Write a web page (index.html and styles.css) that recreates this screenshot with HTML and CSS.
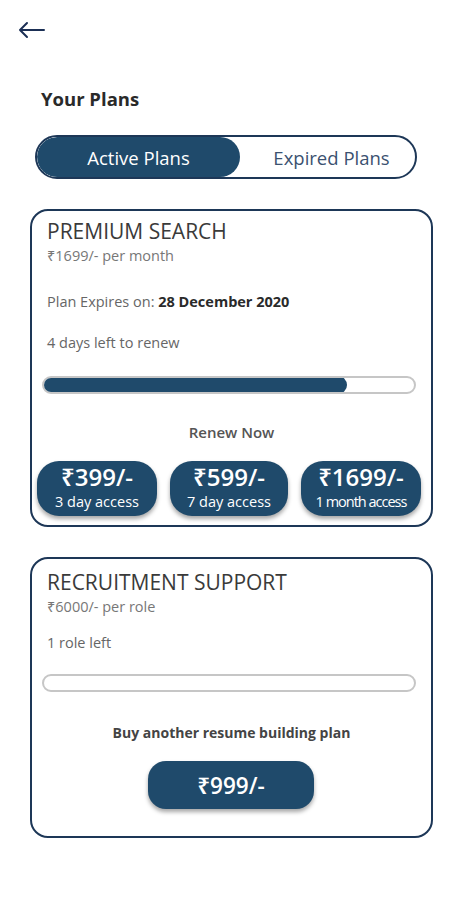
FILE: index.html
```html
<!DOCTYPE html>
<html>
<head>
<meta charset="utf-8">
<link rel="stylesheet" href="styles.css">
</head>
<body>
<div class="screen">
  <div class="top">
    <svg class="back" width="28" height="18" viewBox="0 0 28 18" fill="none" stroke="#1b2f55" stroke-width="2" stroke-linecap="round" stroke-linejoin="round">
      <path d="M26 9H2M9 2L2 9l7 7"/>
    </svg>
  </div>
  <h1 class="title">Your Plans</h1>
  <div class="toggle">
    <div class="tab active">Active Plans</div>
    <div class="tab">Expired Plans</div>
  </div>

  <div class="card card-premium">
    <div class="plan-name">PREMIUM SEARCH</div>
    <div class="plan-price">₹1699/- per month</div>
    <div class="plan-info expires">Plan Expires on: <b>28 December 2020</b></div>
    <div class="plan-info left">4 days left to renew</div>
    <div class="bar"><div class="fill" style="width:305px"></div></div>
    <div class="cta">Renew Now</div>
    <div class="options">
      <div class="opt"><span class="amt">₹399/-</span><span class="dur">3 day access</span></div>
      <div class="opt"><span class="amt">₹599/-</span><span class="dur">7 day access</span></div>
      <div class="opt"><span class="amt">₹1699/-</span><span class="dur tight">1 month access</span></div>
    </div>
  </div>

  <div class="card card-recruit">
    <div class="plan-name">RECRUITMENT SUPPORT</div>
    <div class="plan-price">₹6000/- per role</div>
    <div class="plan-info roles">1 role left</div>
    <div class="bar"><div class="fill" style="width:0px"></div></div>
    <div class="cta buy-label">Buy another resume building plan</div>
    <div class="buy">₹999/-</div>
  </div>
</div>
</body>
</html>
```

FILE: styles.css
```css
* { box-sizing: border-box; }
html, body { margin: 0; padding: 0; background: #fff; }
body {
  font-family: "Open Sans", "Noto Sans", "DejaVu Sans", sans-serif;
  color: #333;
}
.screen {
  width: 454px;
  display: flex;
  flex-direction: column;
}
.top {
  height: 56px;
  padding: 21px 0 0 18px;
}
.back { display: block; }
.title {
  margin: 32px 0 0 41px;
  font-size: 18.5px;
  line-height: 22px;
  font-weight: 700;
  color: #2a2a2a;
}
.toggle {
  margin: 25px 0 0 35px;
  width: 382px;
  height: 44px;
  border: 2px solid #1d3757;
  border-radius: 22px;
  display: flex;
  overflow: hidden;
}
.tab {
  flex: 1;
  display: flex;
  align-items: center;
  justify-content: center;
  font-size: 18.5px;
  color: #3b5170;
  padding-left: 8px;
}
.tab.active {
  flex: 0 0 203px;
  background: #1f4a6b;
  color: #fff;
  border-radius: 22px;
  padding-left: 0;
}
.card {
  margin-left: 30px;
  width: 403px;
  border: 2px solid #1d3757;
  border-radius: 18px;
  display: flex;
  flex-direction: column;
  padding: 0 0 0 15px;
}
.card-premium { margin-top: 30px; height: 318px; padding-top: 8px; }
.card-recruit { margin-top: 30px; height: 281px; padding-top: 11px; }
.plan-name {
  font-size: 21px;
  line-height: 24px;
  color: #3a3a3a;
}
.plan-price {
  margin-top: 4px;
  font-size: 14.5px;
  line-height: 18px;
  color: #777;
}
.plan-info {
  font-size: 14.5px;
  line-height: 18px;
  color: #666;
}
.plan-info b { color: #2a2a2a; font-weight: 700; font-size: 14.5px; }
.expires { margin-top: 28px; }
.left { margin-top: 23px; }
.roles { margin-top: 18px; }
.bar {
  margin: 24px 0 0 -5px;
  width: 374px;
  height: 18px;
  border: 2px solid #c6c6c6;
  border-radius: 9px;
  overflow: hidden;
}
.card-recruit .bar { margin-top: 22px; }
.fill {
  background: #1f4a6b;
  border-radius: 9px;
  margin: -2px 0 0 -2px;
  height: 18px;
}
.cta {
  margin-top: 29px;
  margin-left: -15px;
  text-align: center;
  font-size: 15px;
  line-height: 18px;
  font-weight: 600;
  color: #555;
}
.cta.buy-label { margin-top: 32px; color: #444; font-weight: 700; font-size: 14px; }
.options {
  margin: 20px 0 0 -10px;
  display: flex;
  gap: 13px;
}
.opt {
  width: 120px;
  height: 55px;
  background: #1f4a6b;
  border-radius: 22px;
  box-shadow: 0 3px 4px rgba(0,0,0,0.35);
  display: flex;
  flex-direction: column;
  align-items: center;
  justify-content: flex-start;
  color: #fff;
}
.opt:nth-child(2) { width: 118px; }
.amt {
  font-size: 24px;
  line-height: 31px;
  font-weight: 600;
}
.dur {
  font-size: 14.5px;
  line-height: 19px;
}
.dur.tight { letter-spacing: -1px; }
.buy {
  margin: 19px 0 0 101px;
  width: 166px;
  height: 48px;
  background: #1f4a6b;
  border-radius: 18px;
  box-shadow: 0 3px 4px rgba(0,0,0,0.35);
  color: #fff;
  font-size: 22.5px;
  font-weight: 600;
  display: flex;
  align-items: center;
  justify-content: center;
}
```
